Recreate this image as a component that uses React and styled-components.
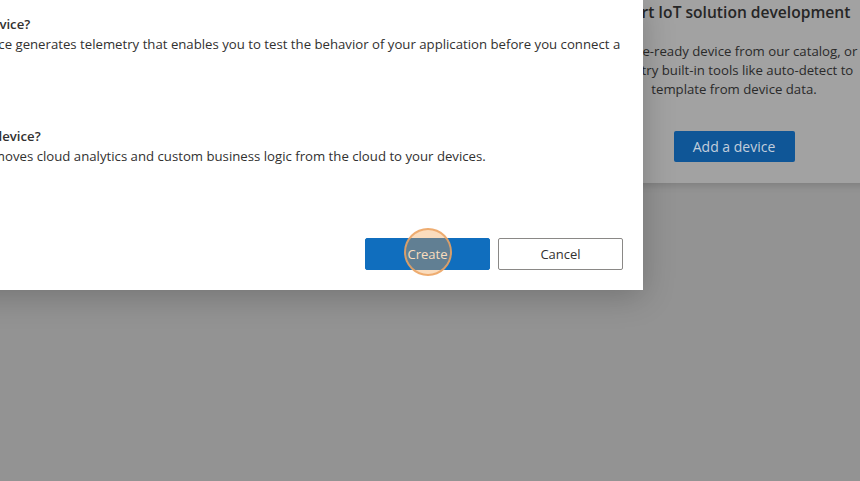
import React from 'react';
import styled, { createGlobalStyle } from 'styled-components';

const Global = createGlobalStyle`
  html, body { margin: 0; padding: 0; overflow: hidden; }
  body { font-family: "Open Sans", "Noto Sans", sans-serif; }
`;

const Page = styled.div`
  position: relative;
  width: 860px;
  height: 481px;
  overflow: hidden;
  background: #939393;
  display: flex;
  justify-content: flex-end;
  align-items: flex-start;
`;

const Card = styled.section`
  width: 292px;
  height: 183px;
  margin-right: -20px;
  box-sizing: border-box;
  background: #a2a2a2;
  box-shadow: 0 2px 8px rgba(0, 0, 0, 0.16);
  display: flex;
  flex-direction: column;
  align-items: center;
  text-align: center;
  color: #262626;
`;

const CardTitle = styled.h2`
  margin: 0;
  font-size: 15.6px;
  font-weight: 600;
  line-height: 24px;
  white-space: nowrap;
`;

const CardText = styled.p`
  margin: 18px 0 0;
  font-size: 13.2px;
  line-height: 19px;
  white-space: nowrap;
  color: #2a2a2a;
`;

const CardButton = styled.button`
  margin-top: 32px;
  width: 121px;
  height: 31px;
  border: none;
  border-radius: 2px;
  background: #0f5697;
  color: #c2cedc;
  font-family: inherit;
  font-size: 14px;
`;

const Dialog = styled.div`
  position: absolute;
  top: 0;
  right: 217px;
  width: 770px;
  height: 290px;
  box-sizing: border-box;
  padding: 14px 10px 20px 24px;
  background: #fff;
  box-shadow: 0 6px 30px rgba(0, 0, 0, 0.22);
  display: flex;
  flex-direction: column;
  color: #323130;
`;

const Section = styled.div`
  display: flex;
  flex-direction: column;
  margin-bottom: ${(p) => p.$gap}px;
`;

const Heading = styled.h3`
  margin: 0;
  font-size: 13.2px;
  font-weight: 600;
  line-height: 20px;
`;

const Body = styled.p`
  margin: 0;
  font-size: 13.2px;
  line-height: 20px;
`;

const ToggleRow = styled.label`
  margin-top: 8px;
  height: 20px;
  display: flex;
  align-items: center;
  gap: 8px;
  font-size: 13.2px;
`;

const Switch = styled.span`
  width: 40px;
  height: 20px;
  box-sizing: border-box;
  border: 1px solid #605e5c;
  border-radius: 10px;
  display: flex;
  align-items: center;
  padding: 0 4px;

  &::after {
    content: '';
    width: 10px;
    height: 10px;
    border-radius: 50%;
    background: #605e5c;
  }
`;

const Footer = styled.div`
  margin-top: auto;
  margin-right: 10px;
  display: flex;
  justify-content: flex-end;
  gap: 8px;
`;

const Button = styled.button`
  position: relative;
  width: 125px;
  height: 32px;
  box-sizing: border-box;
  border-radius: 2px;
  font-family: inherit;
  font-size: 13px;
  border: 1px solid ${(p) => (p.$primary ? '#106ebe' : '#8a8886')};
  background: ${(p) => (p.$primary ? '#106ebe' : '#fff')};
  color: ${(p) => (p.$primary ? '#fff' : '#323130')};
  font-weight: ${(p) => (p.$primary ? 500 : 400)};
`;

const ClickMark = styled.span`
  position: absolute;
  left: 50%;
  top: 50%;
  width: 48px;
  height: 48px;
  margin: -26px 0 0 -24px;
  box-sizing: border-box;
  border-radius: 50%;
  border: 2px solid rgba(236, 165, 100, 0.85);
  background: rgba(241, 157, 72, 0.36);
`;

export default function App() {
  return (
    <>
      <Global />
      <Page>
        <Card>
          <CardTitle>Start IoT solution development</CardTitle>
          <CardText>
            device-ready device from our catalog, or
            <br />
            and try built-in tools like auto-detect to
            <br />
            template from device data.
          </CardText>
          <CardButton>Add a device</CardButton>
        </Card>
        <Dialog>
          <Section $gap={24}>
            <Heading>Simulate this device?</Heading>
            <Body>
              A simulated device generates telemetry that enables you to test the behavior of your
              application before you connect a real device.
            </Body>
            <ToggleRow>
              <Switch />
              No
            </ToggleRow>
          </Section>
          <Section $gap={0}>
            <Heading>Azure IoT Edge device?</Heading>
            <Body>
              An edge device moves cloud analytics and custom business logic from the cloud to your
              devices.
            </Body>
            <ToggleRow>
              <Switch />
              No
            </ToggleRow>
          </Section>
          <Footer>
            <Button $primary>
              Create
              <ClickMark />
            </Button>
            <Button>Cancel</Button>
          </Footer>
        </Dialog>
      </Page>
    </>
  );
}
